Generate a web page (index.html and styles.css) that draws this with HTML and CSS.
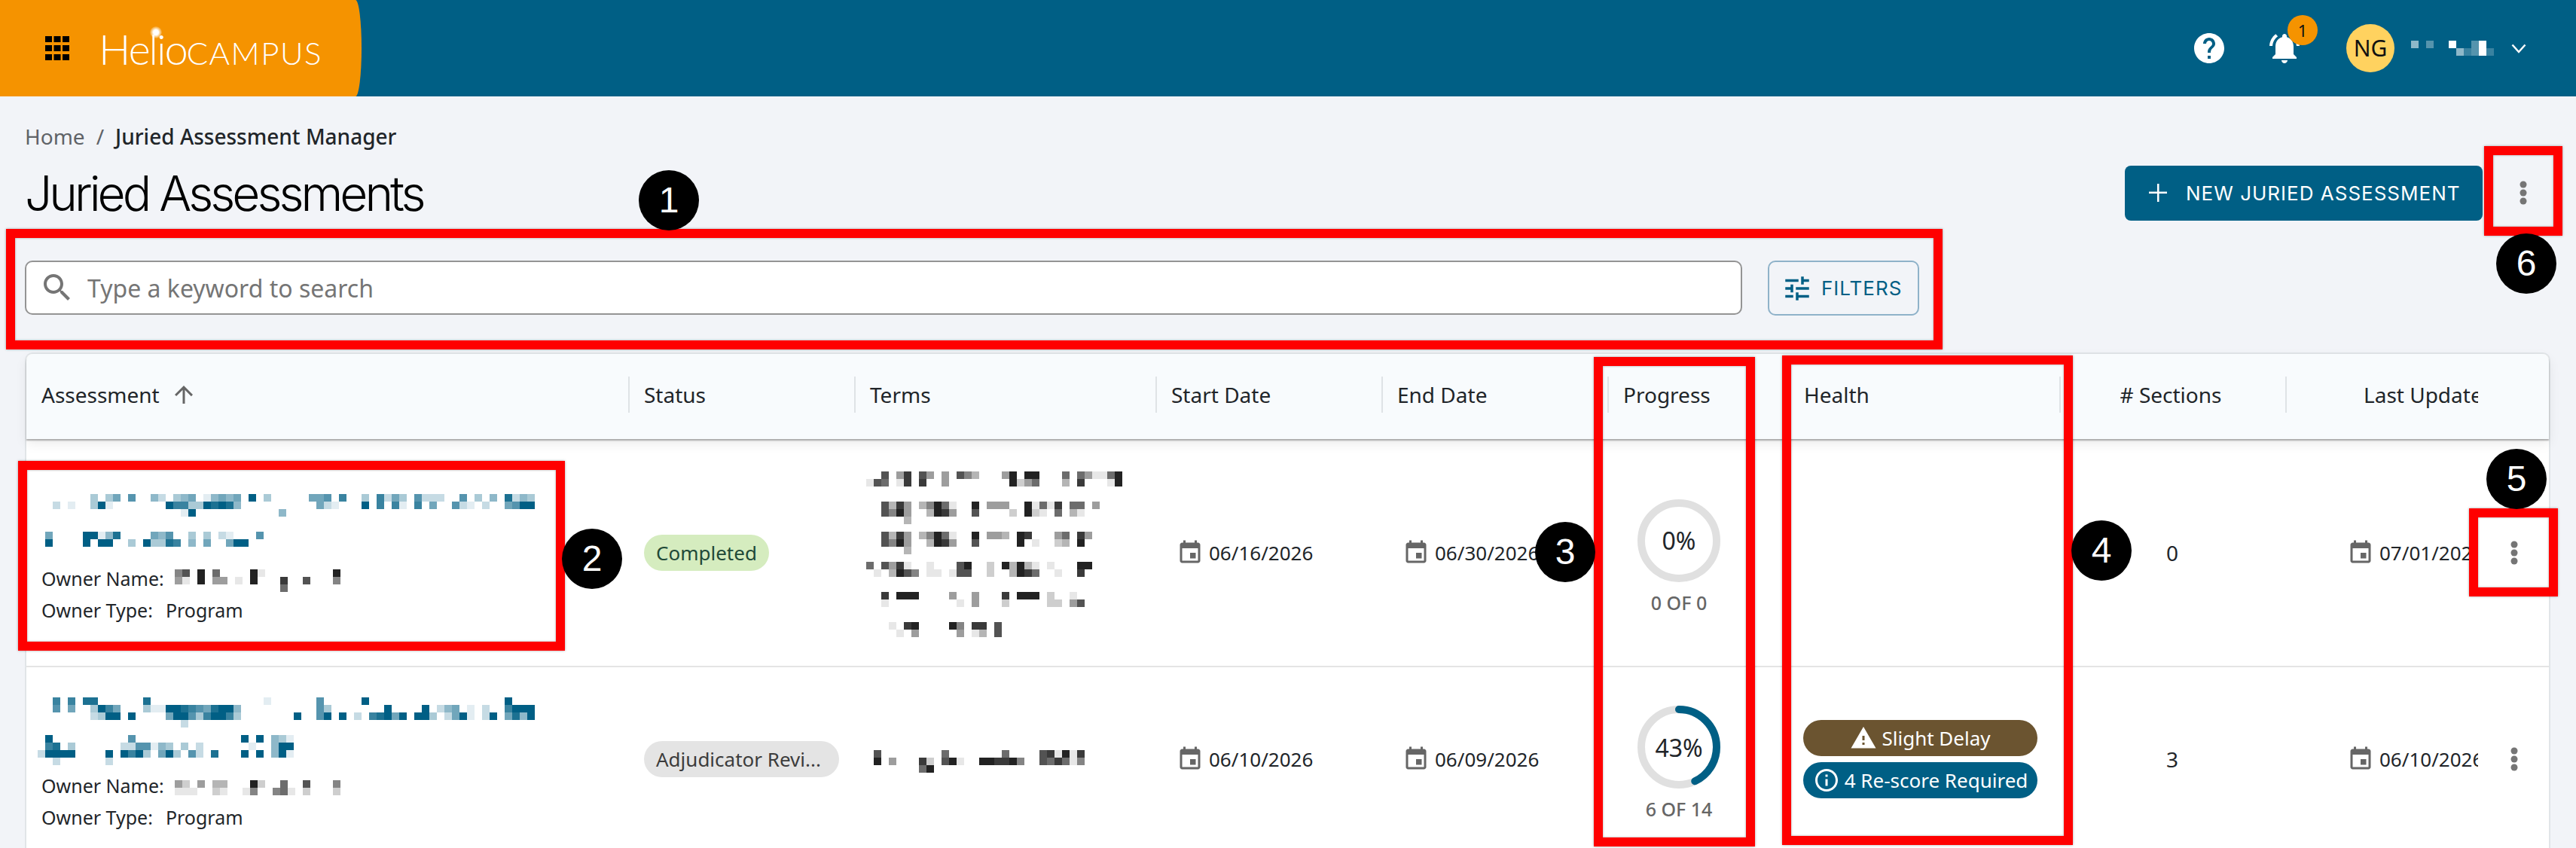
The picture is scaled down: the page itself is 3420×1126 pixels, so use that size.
FILE: index.html
```html
<!DOCTYPE html>
<html lang="en">
<head>
    <meta charset="UTF-8">
    <meta name="viewport" content="width=device-width, initial-scale=1.0">
    <title>Juried Assessments</title>
    <link rel="stylesheet" href="styles.css">
</head>
<body>
    <header class="topbar">
        <div class="brand">
            <svg class="apps-icon" viewBox="0 0 32 32"><path d="M0 0h9v8H0zM11.500 0h9v8h-9zM23 0h9v8h-9zM0 12h9v8H0zM11.500 12h9v8h-9zM23 12h9v8h-9zM0 24h9v8H0zM11.500 24h9v8h-9zM23 24h9v8h-9z"/></svg>
            <div class="logo"><span class="logo-helio">Helio</span><span class="logo-campus">CAMPUS</span><i class="logo-star"></i></div>
        </div>
        <div class="topbar-actions">
            <svg class="help-icon" viewBox="0 0 24 24"><path d="M12 2C6.48 2 2 6.48 2 12s4.480 10 10 10 10-4.480 10-10S17.520 2 12 2zm1 17h-2v-2h2v2zm2.070-7.750l-.9.920C13.450 12.900 13 13.500 13 15h-2v-.5c0-1.100.45-2.100 1.170-2.830l1.240-1.260c.37-.36.59-.86.59-1.410 0-1.100-.9-2-2-2s-2 .9-2 2H8c0-2.210 1.790-4 4-4s4 1.790 4 4c0 .88-.36 1.680-.93 2.250z"/></svg>
            <div class="bell">
                <svg class="bell-icon" viewBox="0 0 24 24"><path d="M7.580 4.080L6.150 2.650C3.750 4.480 2.170 7.300 2.030 10.500h2c.15-2.650 1.510-4.970 3.550-6.420zm12.390 6.420h2c-.15-3.200-1.730-6.020-4.120-7.850l-1.420 1.430c2.020 1.450 3.390 3.770 3.540 6.420zM18 11c0-3.070-1.640-5.640-4.500-6.320V4c0-.83-.67-1.500-1.500-1.500s-1.500.67-1.500 1.500v.68C7.630 5.360 6 7.920 6 11v5l-2 2v1h16v-1l-2-2v-5zm-6 11c.14 0 .27-.01.4-.04.65-.14 1.180-.58 1.440-1.180.1-.24.15-.5.15-.78h-4c.01 1.100.9 2 2.010 2z"/></svg>
                <span class="bell-badge">1</span>
            </div>
            <div class="avatar">NG</div>
            <svg class="mosaic mosaic-white user-name" data-cols="11" data-rows="0:5 2:3 5:9 8:3 9:9|6:5 7:2 8:3 9:9 10:2"></svg>
            <svg class="chevron" viewBox="0 0 20 13"><path d="M1.500 1.500L10 11l8.500-9.500" fill="none" stroke="#fff" stroke-width="2.500"/></svg>
        </div>
    </header>

    <main class="page">
        <nav class="breadcrumb">
            <span class="crumb-home">Home</span>
            <span class="crumb-sep">/</span>
            <span class="crumb-current">Juried Assessment Manager</span>
        </nav>

        <div class="title-row">
            <h1>Juried Assessments</h1>
            <button class="btn-new" type="button">
                <svg class="plus-icon" viewBox="0 0 24 24"><path d="M11 0h2.500v24H11zM0 10.500h24V13H0z"/></svg>
                NEW JURIED ASSESSMENT
            </button>
            <div class="page-menu">
                <svg class="kebab" viewBox="0 0 10 32"><circle cx="5" cy="5" r="4.500"/><circle cx="5" cy="16" r="4.500"/><circle cx="5" cy="27" r="4.500"/></svg>
            </div>
        </div>

        <div class="toolbar">
            <label class="search">
                <svg class="search-icon" viewBox="0 0 24 24"><path d="M15.500 14h-.79l-.28-.27C15.410 12.590 16 11.110 16 9.500 16 5.910 13.090 3 9.500 3S3 5.910 3 9.500 5.910 16 9.500 16c1.610 0 3.090-.59 4.230-1.570l.27.28v.79l5 4.990L20.490 19l-4.990-5zm-6 0C7.010 14 5 11.990 5 9.500S7.010 5 9.500 5 14 7.010 14 9.500 11.990 14 9.500 14z"/></svg>
                <input type="text" placeholder="Type a keyword to search">
            </label>
            <button class="btn-filters" type="button">
                <svg class="tune-icon" viewBox="0 0 24 24"><path d="M3 17v2h6v-2H3zM3 5v2h10V5H3zm10 16v-2h8v-2h-8v-2h-2v6h2zM7 9v2H3v2h4v2h2V9H7zm14 4v-2H11v2h10zm-6-4h2V7h4V5h-4V3h-2v6z"/></svg>
                FILTERS
            </button>
        </div>

        <section class="table">
            <div class="table-head grid-row">
                <div class="th th-first">Assessment
                    <svg class="sort-icon" viewBox="0 0 24 24"><path d="M4 12l1.410 1.410L11 7.830V20h2V7.830l5.580 5.590L20 12l-8-8-8 8z"/></svg>
                </div>
                <div class="th">Status</div>
                <div class="th">Terms</div>
                <div class="th">Start Date</div>
                <div class="th">End Date</div>
                <div class="th">Progress</div>
                <div class="th">Health</div>
                <div class="th th-center"># Sections</div>
                <div class="th th-update">Last Updated</div>
                <div class="th-menu"></div>
            </div>

            <div class="table-row grid-row row-one">
                <div class="td cell-assessment">
                    <svg class="mosaic mosaic-blue assessment-title" data-cols="66" data-rows="7:3 9:3 10:5 12:6 15:4 16:2 18:3 19:4 20:5 22:1 23:4 24:5 25:4 26:5 28:9 30:3 36:5 37:5 38:6 40:7 43:3 45:7 46:2 47:5 48:3 50:6 51:2 52:2 53:2 56:6 58:3 60:4 62:8 63:2 64:4 65:3|2:2 4:1 7:3 8:9 9:1 17:9 18:7 19:7 20:3 21:3 22:9 23:8 24:9 25:8 26:4 37:5 38:2 39:1 43:9 45:7 47:7 48:1 50:7 52:5 55:6 56:2 57:1 59:2 62:5 63:6 64:9 65:9|19:1 20:9 32:4|||1:5 6:9 7:9 8:1 9:4 10:8 15:5 16:4 17:6 20:3 22:3 24:2 25:1 29:6|1:9 6:9 8:9 9:9 12:3 14:9 15:3 16:3 17:8 18:7 20:4 22:5 25:5 26:9 27:9|"></svg>
                    <div class="owner-line"><span>Owner Name:</span>
                        <svg class="mosaic mosaic-gray owner-mosaic" data-cols="22" data-rows="0:5 1:7 3:9 5:6 10:9 11:1 21:9|0:4 1:1 3:9 5:4 6:4 8:1 10:9 14:8 17:7 21:5|14:6"></svg>
                    </div>
                    <div class="owner-line"><span>Owner Type:</span><span class="owner-type">Program</span></div>
                </div>
                <div class="td cell-status"><span class="chip chip-green">Completed</span></div>
                <div class="td cell-terms">
                    <svg class="mosaic mosaic-gray terms-mosaic" data-cols="34" data-rows="2:7 4:4 5:8 7:7 8:4 10:4 12:7 13:5 14:3 18:4 19:9 21:9 22:9 26:6 28:6 29:4 30:1 31:1 32:6 33:9|0:1 1:7 2:6 4:1 5:8 7:8 10:4 19:9 20:2 21:4 22:6 26:3 28:8 32:1 33:9|||2:7 3:3 4:8 5:4 7:3 8:5 9:9 10:6 11:1 14:9 16:4 17:4 18:4 21:9 22:1 23:6 24:1 25:8 27:6 28:6 30:4|2:7 3:5 4:9 5:4 8:3 9:9 10:8 11:4 14:7 19:2 21:9 22:2 23:1 25:6 27:3 28:1|5:3||2:7 3:3 4:8 5:4 7:3 8:5 9:9 10:6 11:1 14:9 16:4 17:4 18:3 20:9 21:8 25:4 26:6 28:8 29:4|2:7 3:5 4:9 5:4 8:3 9:9 10:8 11:4 14:7 20:9 22:1 25:2 26:3 28:9|5:3||0:6 2:7 3:4 4:8 5:1 8:1 12:7 13:9 16:2 18:9 19:3 20:9 21:3 22:1 24:1 28:9 29:9|1:1 3:3 4:9 5:7 6:5 8:1 9:1 11:1 12:7 13:7 16:2 19:3 20:9 21:8 22:6 25:1 28:8|||2:8 4:9 5:9 6:9 11:4 14:4 18:8 20:9 21:9 22:9 24:2 27:1|2:1 12:1 14:4 18:2 24:2 25:2 27:4 28:7|||3:1 5:8 6:9 11:9 12:5 14:8 15:8 17:7|4:1 6:4 12:4 14:1 15:3 17:7"></svg>
                </div>
                <div class="td cell-date">
                    <svg class="date-icon" viewBox="0 0 24 24"><path d="M17 12h-5v5h5v-5zM16 1v2H8V1H6v2H5c-1.110 0-1.990.9-1.990 2L3 19c0 1.100.89 2 2 2h14c1.100 0 2-.9 2-2V5c0-1.100-.9-2-2-2h-1V1h-2zm3 18H5V8h14v11z"/></svg>06/16/2026
                </div>
                <div class="td cell-date">
                    <svg class="date-icon" viewBox="0 0 24 24"><path d="M17 12h-5v5h5v-5zM16 1v2H8V1H6v2H5c-1.110 0-1.990.9-1.990 2L3 19c0 1.100.89 2 2 2h14c1.100 0 2-.9 2-2V5c0-1.100-.9-2-2-2h-1V1h-2zm3 18H5V8h14v11z"/></svg>06/30/2026
                </div>
                <div class="td cell-progress">
                    <div class="ring">
                        <svg class="ring-svg" viewBox="0 0 110 110"><circle class="ring-track" cx="55" cy="55" r="50"/></svg>
                        <span class="ring-label">0%</span>
                    </div>
                    <div class="ring-count">0 OF 0</div>
                </div>
                <div class="td cell-health"></div>
                <div class="td cell-sections">0</div>
                <div class="td cell-date cell-update">
                    <svg class="date-icon" viewBox="0 0 24 24"><path d="M17 12h-5v5h5v-5zM16 1v2H8V1H6v2H5c-1.110 0-1.990.9-1.990 2L3 19c0 1.100.89 2 2 2h14c1.100 0 2-.9 2-2V5c0-1.100-.9-2-2-2h-1V1h-2zm3 18H5V8h14v11z"/></svg>07/01/2026
                </div>
                <div class="td cell-menu">
                    <svg class="kebab" viewBox="0 0 10 32"><circle cx="5" cy="5" r="4.500"/><circle cx="5" cy="16" r="4.500"/><circle cx="5" cy="27" r="4.500"/></svg>
                </div>
            </div>

            <div class="table-row grid-row row-two">
                <div class="td cell-assessment">
                    <svg class="mosaic mosaic-blue assessment-title" data-cols="66" data-rows="2:7 4:7 6:8 7:8 14:8 30:1 37:6 43:9 62:9|2:6 4:5 7:3 8:9 9:7 10:5 14:3 15:1 16:1 17:9 18:9 19:8 20:7 21:6 22:5 23:8 24:9 25:9 26:4 37:6 38:3 46:9 51:9 53:2 54:4 55:5 57:1 59:2 62:7 63:9 64:9 65:9|7:2 8:3 9:9 10:9 12:9 17:5 18:9 19:9 20:6 21:3 22:7 23:9 24:9 25:7 26:3 34:9 37:6 38:9 40:9 42:2 44:7 45:8 46:9 47:5 48:9 50:9 51:9 52:3 54:2 55:5 56:9 57:1 59:2 60:9 62:5 63:8 64:4 65:9|19:2||1:9 12:6 27:9 29:9 31:4 32:3 33:1|1:7 2:8 4:3 11:2 12:2 13:6 14:6 15:1 16:4 17:3 19:3 21:2 28:1 31:4 32:9 33:9|0:2 1:9 2:9 3:9 4:9 9:9 11:9 12:7 13:9 14:3 16:5 17:9 18:3 20:6 21:2 23:8 27:9 29:9 31:4 32:9 33:1|2:2 9:2"></svg>
                    <div class="owner-line"><span>Owner Name:</span>
                        <svg class="mosaic mosaic-gray owner-mosaic" data-cols="22" data-rows="0:4 1:2 3:4 5:3 6:3 10:9 11:2 14:6 17:7 21:5|0:1 1:1 2:1 5:2 6:1 9:1 10:5 13:5 14:6 15:1 17:2 21:2"></svg>
                    </div>
                    <div class="owner-line"><span>Owner Type:</span><span class="owner-type">Program</span></div>
                </div>
                <div class="td cell-status"><span class="chip chip-gray">Adjudicator Revi...</span></div>
                <div class="td cell-terms">
                    <svg class="mosaic mosaic-gray terms-mosaic" data-cols="34" data-rows="1:7 10:6 18:6 23:7 24:8 25:1 26:9 27:1 28:8|1:9 3:4 7:8 8:2 10:7 11:9 12:1 15:9 16:9 17:8 18:8 19:9 20:5 23:7 24:6 25:8 26:6 27:1 28:5|7:6 8:9"></svg>
                </div>
                <div class="td cell-date">
                    <svg class="date-icon" viewBox="0 0 24 24"><path d="M17 12h-5v5h5v-5zM16 1v2H8V1H6v2H5c-1.110 0-1.990.9-1.990 2L3 19c0 1.100.89 2 2 2h14c1.100 0 2-.9 2-2V5c0-1.100-.9-2-2-2h-1V1h-2zm3 18H5V8h14v11z"/></svg>06/10/2026
                </div>
                <div class="td cell-date">
                    <svg class="date-icon" viewBox="0 0 24 24"><path d="M17 12h-5v5h5v-5zM16 1v2H8V1H6v2H5c-1.110 0-1.990.9-1.990 2L3 19c0 1.100.89 2 2 2h14c1.100 0 2-.9 2-2V5c0-1.100-.9-2-2-2h-1V1h-2zm3 18H5V8h14v11z"/></svg>06/09/2026
                </div>
                <div class="td cell-progress">
                    <div class="ring">
                        <svg class="ring-svg" viewBox="0 0 110 110">
                            <circle class="ring-track" cx="55" cy="55" r="50"/>
                            <circle class="ring-value" cx="55" cy="55" r="50" pathLength="100" stroke-dasharray="43 100" transform="rotate(-90 55 55)"/>
                        </svg>
                        <span class="ring-label">43%</span>
                    </div>
                    <div class="ring-count">6 OF 14</div>
                </div>
                <div class="td cell-health">
                    <span class="health-badge badge-brown">
                        <svg class="badge-icon" viewBox="0 0 24 24"><path d="M1 21h22L12 2 1 21zm12-3h-2v-2h2v2zm0-4h-2v-4h2v4z"/></svg>Slight Delay
                    </span>
                    <span class="health-badge badge-blue">
                        <svg class="badge-icon" viewBox="0 0 24 24"><path d="M11 7h2v2h-2zm0 4h2v6h-2zm1-9C6.480 2 2 6.480 2 12s4.480 10 10 10 10-4.480 10-10S17.520 2 12 2zm0 18c-4.410 0-8-3.590-8-8s3.590-8 8-8 8 3.590 8 8-3.590 8-8 8z"/></svg>4 Re-score Required
                    </span>
                </div>
                <div class="td cell-sections">3</div>
                <div class="td cell-date cell-update">
                    <svg class="date-icon" viewBox="0 0 24 24"><path d="M17 12h-5v5h5v-5zM16 1v2H8V1H6v2H5c-1.110 0-1.990.9-1.990 2L3 19c0 1.100.89 2 2 2h14c1.100 0 2-.9 2-2V5c0-1.100-.9-2-2-2h-1V1h-2zm3 18H5V8h14v11z"/></svg>06/10/2026
                </div>
                <div class="td cell-menu">
                    <svg class="kebab" viewBox="0 0 10 32"><circle cx="5" cy="5" r="4.500"/><circle cx="5" cy="16" r="4.500"/><circle cx="5" cy="27" r="4.500"/></svg>
                </div>
            </div>
        </section>
    </main>

    <!-- numbered callouts drawn over the screen -->
    <div class="red-box box-1"></div>
    <div class="red-box box-2"></div>
    <div class="red-box box-3"></div>
    <div class="red-box box-4"></div>
    <div class="red-box box-5"></div>
    <div class="red-box box-6"></div>
    <div class="callout callout-1">1</div>
    <div class="callout callout-2">2</div>
    <div class="callout callout-3">3</div>
    <div class="callout callout-4">4</div>
    <div class="callout callout-5">5</div>
    <div class="callout callout-6">6</div>

    <script src="mosaic.js"></script>
</body>
</html>
```

FILE: styles.css
```css
html,
body {
    height: 100%;
    margin: 0;
    overflow: hidden;
}

body {
    position: relative;
    background-color: #f2f4f8;
    color: #212529;
    font-family: "Noto Sans", "Open Sans", sans-serif;
    font-size: 26px;
}

svg {
    display: block;
    flex: none;
}

/* top bar */
.topbar {
    display: flex;
    justify-content: space-between;
    height: 128px;
    background-color: #005f85;
}

.brand {
    position: relative;
    display: flex;
    align-items: center;
    width: 480px;
    padding-left: 60px;
    box-sizing: border-box;
    background-color: #f59300;
    border-radius: 0 8px 8px 0 / 0 50% 50% 0;
}

.apps-icon {
    width: 32px;
    height: 32px;
}

.logo {
    position: relative;
    display: flex;
    align-items: baseline;
    margin-left: 39px;
    color: #fff;
    font-family: Lato, sans-serif;
    font-weight: 300;
}

.logo-helio {
    font-size: 56px;
    letter-spacing: -2px;
}

.logo-campus {
    font-size: 42px;
    letter-spacing: 1.500px;
}

.logo-star {
    position: absolute;
    left: 68px;
    top: 4px;
    width: 16px;
    height: 16px;
    border-radius: 50%;
    background: radial-gradient(circle, #fff 30%, rgba(255, 255, 255, 0) 75%);
}

.topbar-actions {
    display: flex;
    align-items: center;
    padding-right: 66px;
}

.help-icon {
    width: 48px;
    height: 48px;
    fill: #fff;
}

.bell {
    position: relative;
    margin-left: 52px;
}

.bell-icon {
    width: 48px;
    height: 48px;
    fill: #fff;
}

.bell-badge {
    position: absolute;
    left: 28px;
    top: -20px;
    width: 40px;
    height: 40px;
    border-radius: 50%;
    background-color: #f59300;
    color: #111;
    font-size: 22px;
    line-height: 40px;
    text-align: center;
}

.avatar {
    width: 64px;
    height: 64px;
    margin-left: 58px;
    border-radius: 50%;
    background-color: #ffd25f;
    color: #111;
    font-size: 30px;
    line-height: 64px;
    text-align: center;
}

.user-name {
    margin-left: 22px;
}

.chevron {
    width: 20px;
    height: 13px;
    margin-left: 23px;
}

/* page */
.page {
    padding: 33px 34px 0 33px;
}

.breadcrumb {
    display: flex;
    gap: 15px;
    height: 40px;
    font-size: 28px;
    line-height: 40px;
}

.crumb-home,
.crumb-sep {
    color: #5f6368;
}

.crumb-current {
    font-weight: 500;
}

.title-row {
    display: flex;
    align-items: center;
    height: 80px;
    margin-top: 15px;
}

h1 {
    flex: 1;
    margin: 0;
    color: #000;
    font-family: Inter, sans-serif;
    font-size: 64px;
    font-weight: 300;
    letter-spacing: -4px;
}

.btn-new {
    display: flex;
    align-items: center;
    width: 475px;
    height: 73px;
    padding: 0 0 0 32px;
    border: 0;
    border-radius: 8px;
    background-color: #005f85;
    color: #fff;
    font-family: Inter, sans-serif;
    font-size: 26px;
    letter-spacing: 1px;
}

.plus-icon {
    width: 24px;
    height: 24px;
    margin-right: 25px;
    fill: #fff;
}

.page-menu {
    display: flex;
    width: 90px;
    padding-left: 49px;
    box-sizing: border-box;
}

.kebab {
    width: 10px;
    height: 32px;
    fill: #757575;
}

.toolbar {
    display: flex;
    align-items: flex-start;
    gap: 34px;
    width: 2515px;
    margin-top: 50px;
}

.search {
    flex: 1;
    display: flex;
    align-items: center;
    height: 72px;
    padding-left: 17px;
    box-sizing: border-box;
    border: 2px solid #949494;
    border-radius: 10px;
    background-color: #fff;
}

.search-icon {
    width: 48px;
    height: 48px;
    fill: #757575;
}

.search input {
    flex: 1;
    margin-left: 14px;
    border: 0;
    outline: 0;
    background: none;
    font-family: inherit;
    font-size: 32px;
}

.search input::placeholder {
    color: #757575;
    opacity: 1;
}

.btn-filters {
    display: flex;
    align-items: center;
    width: 201px;
    height: 73px;
    padding: 0 0 0 16px;
    border: 2px solid #8fb2c9;
    border-radius: 10px;
    background: none;
    color: #005f85;
    font-family: Inter, sans-serif;
    font-size: 26px;
    letter-spacing: 1px;
}

.tune-icon {
    width: 42px;
    height: 42px;
    margin-right: 11px;
    fill: #005f85;
}

/* table */
.table {
    margin-top: 49px;
    border: 2px solid #e1e5e8;
    border-bottom: 0;
    border-radius: 10px 10px 0 0;
    background-color: #fff;
}

.grid-row {
    display: grid;
    grid-template-columns: 799px 300px 400px 300px 300px 240px 360px 300px 256px 94px;
}

.table-head {
    position: relative;
    align-items: center;
    height: 113px;
    padding-bottom: 5px;
    box-sizing: border-box;
    border-radius: 10px 10px 0 0;
    background-color: #f8fbfd;
    box-shadow: 0 2px 2px rgba(0, 0, 0, .3), 0 6px 16px rgba(0, 0, 0, .08);
}

.th {
    display: flex;
    align-items: center;
    height: 48px;
    padding-left: 19px;
    border-left: 2px solid #dfe3e6;
    font-size: 28px;
    overflow: hidden;
    white-space: nowrap;
}

.th-first {
    padding-left: 20px;
    border-left: 0;
}

.th-center {
    justify-content: center;
    padding: 0 6px 0 0;
}

.th-update {
    padding-left: 102px;
}

.sort-icon {
    width: 36px;
    height: 36px;
    margin-left: 14px;
    fill: #666;
}

.table-row {
    border-bottom: 2px solid #e4e4e4;
}

.row-one {
    height: 301px;
}

.row-two {
    height: 244px;
}

.td {
    display: flex;
    align-items: center;
    overflow: hidden;
}

.cell-assessment {
    flex-direction: column;
    align-items: flex-start;
    padding-left: 15px;
}

.row-one .cell-assessment {
    padding-top: 73px;
}

.row-two .cell-assessment {
    padding-top: 40px;
}

.assessment-title {
    margin-bottom: 6px;
}

.row-one .assessment-title {
    margin-bottom: 11px;
}

.owner-line {
    display: flex;
    align-items: flex-start;
    margin-left: 5px;
    font-size: 25px;
    line-height: 42px;
}

.owner-mosaic {
    margin: 9px 0 0 14px;
}

.row-two .owner-mosaic {
    margin-top: 14px;
}

.owner-type {
    margin-left: 17px;
}

.cell-status {
    padding-left: 21px;
}

.chip {
    height: 48px;
    padding: 0 16px;
    border-radius: 24px;
    font-size: 26px;
    line-height: 48px;
    white-space: nowrap;
}

.chip-green {
    background-color: #d5ecbf;
    color: #1f4a38;
}

.chip-gray {
    padding-right: 24px;
    background-color: #e4e4e4;
    color: #3c3c3c;
}

.cell-terms {
    padding-left: 16px;
}

.row-one .terms-mosaic {
    margin-top: 5px;
}

.row-two .terms-mosaic {
    margin-top: 6px;
}

.mosaic {
    shape-rendering: crispEdges;
}

.mosaic-blue {
    fill: #005f85;
}

.mosaic-gray {
    fill: #222;
}

.mosaic-white {
    fill: #fff;
}

.cell-date {
    padding-left: 28px;
    white-space: nowrap;
}

.cell-update {
    padding-left: 82px;
}

.date-icon {
    width: 36px;
    height: 36px;
    margin-right: 7px;
    fill: #666;
}

.cell-progress {
    flex-direction: column;
    justify-content: center;
    padding: 11px 50px 0 0;
}

.ring {
    display: grid;
    place-items: center;
    width: 110px;
    height: 110px;
}

.ring-svg,
.ring-label {
    grid-area: 1 / 1;
}

.ring-svg {
    width: 110px;
    height: 110px;
    fill: none;
}

.ring-track {
    stroke: #e0e0e0;
    stroke-width: 10;
}

.ring-value {
    stroke: #005f85;
    stroke-width: 10;
    stroke-linecap: round;
}

.ring-label {
    font-size: 32px;
}

.ring-count {
    margin-top: 11px;
    color: #666;
    font-size: 25px;
    font-weight: 500;
    line-height: 32px;
}

.cell-health {
    flex-direction: column;
    justify-content: center;
    align-items: flex-start;
    gap: 8px;
    padding-left: 20px;
}

.health-badge {
    display: flex;
    align-items: center;
    justify-content: center;
    width: 311px;
    height: 48px;
    border-radius: 24px;
    color: #fff;
    font-size: 26px;
    white-space: nowrap;
}

.badge-brown {
    background-color: #6b5430;
}

.badge-blue {
    background-color: #005f85;
}

.badge-icon {
    width: 36px;
    height: 36px;
    margin-right: 6px;
    fill: #fff;
}

.cell-sections {
    justify-content: center;
    font-size: 28px;
}

.cell-menu {
    justify-content: flex-start;
    padding-left: 43px;
}

/* callouts */
.red-box {
    position: absolute;
    box-sizing: border-box;
    border: 12px solid #f00;
    box-shadow: 0 0 3px rgba(0, 0, 0, .35), inset 0 0 3px rgba(0, 0, 0, .35);
}

.box-1 { left: 8px; top: 304px; width: 2571px; height: 160px; }
.box-2 { left: 24px; top: 612px; width: 726px; height: 252px; }
.box-3 { left: 2116px; top: 474px; width: 214px; height: 650px; }
.box-4 { left: 2366px; top: 472px; width: 386px; height: 650px; }
.box-5 { left: 3278px; top: 675px; width: 118px; height: 117px; }
.box-6 { left: 3298px; top: 194px; width: 104px; height: 119px; }

.callout {
    position: absolute;
    width: 80px;
    height: 80px;
    border-radius: 50%;
    background-color: #000;
    color: #fff;
    font-family: "Liberation Sans", Arial, sans-serif;
    font-size: 48px;
    line-height: 80px;
    text-align: center;
}

.callout-1 { left: 848px; top: 226px; }
.callout-2 { left: 746px; top: 702px; }
.callout-3 { left: 2038px; top: 693px; }
.callout-4 { left: 2750px; top: 691px; }
.callout-5 { left: 3301px; top: 596px; }
.callout-6 { left: 3314px; top: 310px; }
```

FILE: mosaic.js
```js
// blurred-out text: data-rows holds "column:level" cells, rows split by |
document.querySelectorAll(".mosaic").forEach(function (svg) {
    const rows = svg.dataset.rows.split("|");
    const cols = parseInt(svg.dataset.cols);
    svg.setAttribute("width", cols * 10);
    svg.setAttribute("height", rows.length * 10);

    rows.forEach(function (row, y) {
        row.split(" ").filter(Boolean).forEach(function (cell) {
            const parts = cell.split(":");
            const rect = document.createElementNS("http://www.w3.org/2000/svg", "rect");
            rect.setAttribute("x", parts[0] * 10);
            rect.setAttribute("y", y * 10);
            rect.setAttribute("width", 10);
            rect.setAttribute("height", 10);
            rect.setAttribute("opacity", parts[1] / 9);
            svg.appendChild(rect);
        });
    });
});
```
